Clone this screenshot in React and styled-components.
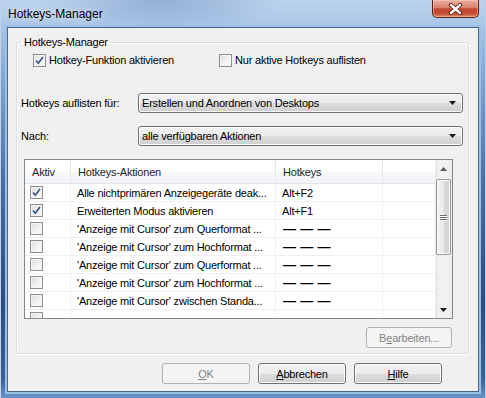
import styled, { createGlobalStyle } from 'styled-components';

const GlobalStyle = createGlobalStyle`
  html, body {
    margin: 0;
    padding: 0;
  }
  body {
    font-family: "Liberation Sans", Arial, sans-serif;
    font-size: 11px;
    letter-spacing: -0.2px;
    color: #000;
  }
  #root {
    width: 486px;
    height: 398px;
    overflow: hidden;
  }
`;

const rows = [
  { on: true, action: 'Alle nichtprimären Anzeigegeräte deak...', key: 'Alt+F2' },
  { on: true, action: 'Erweiterten Modus aktivieren', key: 'Alt+F1' },
  { on: false, action: "'Anzeige mit Cursor' zum Querformat ...", key: null },
  { on: false, action: "'Anzeige mit Cursor' zum Hochformat ...", key: null },
  { on: false, action: "'Anzeige mit Cursor' zum Querformat ...", key: null },
  { on: false, action: "'Anzeige mit Cursor' zum Hochformat ...", key: null },
  { on: false, action: "'Anzeige mit Cursor' zwischen Standa...", key: null },
];

const CheckBox = ({ checked }) => (
  <Box>
    {checked && (
      <svg width="11" height="11" viewBox="0 0 11 11">
        <path d="M2 5.5 L4.3 8.2 L9 2" fill="none" stroke="#3d5684" strokeWidth="1.7" />
      </svg>
    )}
  </Box>
);

const Arrow = ({ up }) => (
  <svg width="7" height="4" viewBox="0 0 7 4">
    <path d={up ? 'M0 4 L3.5 0 L7 4 Z' : 'M0 0 L7 0 L3.5 4 Z'} fill={up ? '#5a5a5a' : '#1a1a1a'} />
  </svg>
);

const App = () => {
  return (
    <>
      <GlobalStyle />
      <Window>
        <TitleBar>
          <Title>Hotkeys-Manager</Title>
          <CloseBtn>
            <svg width="15" height="12" viewBox="0 0 15 12">
              <path d="M3 2 L12 10 M12 2 L3 10" stroke="#5b1d12" strokeWidth="4.2" strokeLinecap="round" />
              <path d="M3 2 L12 10 M12 2 L3 10" stroke="#fff" strokeWidth="2.4" strokeLinecap="round" />
            </svg>
          </CloseBtn>
        </TitleBar>
        <Client>
          <Group>
            <Legend>Hotkeys-Manager</Legend>
            <CheckRow>
              <CheckOption $width={186}>
                <CheckBox checked />
                Hotkey-Funktion aktivieren
              </CheckOption>
              <CheckOption>
                <CheckBox />
                Nur aktive Hotkeys auflisten
              </CheckOption>
            </CheckRow>
            <FieldRow $top={26}>
              <FieldLabel>Hotkeys auflisten für:</FieldLabel>
              <Select>
                <span>Erstellen und Anordnen von Desktops</span>
                <Arrow />
              </Select>
            </FieldRow>
            <FieldRow $top={13}>
              <FieldLabel>Nach:</FieldLabel>
              <Select>
                <span>alle verfügbaren Aktionen</span>
                <Arrow />
              </Select>
            </FieldRow>
            <List>
              <Table>
                <HeaderRow>
                  <HeadCell $w={46}>Aktiv</HeadCell>
                  <HeadCell $w={205}>Hotkeys-Aktionen</HeadCell>
                  <HeadCell $w={107}>Hotkeys</HeadCell>
                  <HeadCell $w={52} />
                </HeaderRow>
                {rows.map((r, i) => (
                  <Row key={i}>
                    <Cell $w={46} $pad={5}>
                      <CheckBox checked={r.on} />
                    </Cell>
                    <Cell $w={205}>{r.action}</Cell>
                    <Cell $w={107}>{r.key ? r.key : <Dashes>— — —</Dashes>}</Cell>
                    <Cell $w={52} />
                  </Row>
                ))}
                <Row>
                  <Cell $w={46} $pad={5}>
                    <CheckBox />
                  </Cell>
                  <Cell $w={205} />
                  <Cell $w={107} />
                  <Cell $w={52} />
                </Row>
              </Table>
              <ScrollBar>
                <ScrollBtn>
                  <Arrow up />
                </ScrollBtn>
                <Thumb>
                  <Grip />
                  <Grip />
                  <Grip />
                </Thumb>
                <ScrollBtn $bottom>
                  <Arrow />
                </ScrollBtn>
              </ScrollBar>
            </List>
            <ActionRow>
              <Button disabled $w={86}>
                B<u>e</u>arbeiten...
              </Button>
            </ActionRow>
          </Group>
          <ButtonRow>
            <Button disabled>
              <u>O</u>K
            </Button>
            <Button>
              <u>A</u>bbrechen
            </Button>
            <Button>
              <u>H</u>ilfe
            </Button>
          </ButtonRow>
        </Client>
      </Window>
    </>
  );
};

export default App;

const Window = styled.div`
  width: 486px;
  height: 398px;
  box-sizing: border-box;
  display: flex;
  flex-direction: column;
  border-left: 1px solid #c3d3e6;
  border-right: 1px solid #b9cde4;
  background:
    radial-gradient(ellipse 120px 30px at 160px 0px, rgba(70, 110, 170, 0.35), transparent),
    linear-gradient(180deg, #bcd3ec 0px, #a9c5e7 26px, #87aad6 70px, #4a6fa6 180px, #2c4c82 300px, #3a6199 380px, #6a93c8 398px);
`;

const TitleBar = styled.div`
  height: 27px;
  display: flex;
  justify-content: space-between;
  align-items: flex-start;
  padding: 0 6px 0 7px;
`;

const Title = styled.div`
  font-size: 12px;
  letter-spacing: 0;
  line-height: 14px;
  padding-top: 7px;
  color: #000;
  text-shadow: 0 0 8px rgba(255, 255, 255, 0.9);
`;

const CloseBtn = styled.div`
  width: 45px;
  height: 17px;
  display: flex;
  align-items: center;
  justify-content: center;
  border: 1px solid #5e2419;
  border-top: none;
  border-radius: 0 0 5px 5px;
  background: linear-gradient(180deg, #eab0a2 0%, #d9806c 45%, #c3462e 52%, #c84e33 80%, #de8a6e 100%);
  box-shadow: inset 0 0 0 1px rgba(255, 210, 200, 0.45);
`;

const Client = styled.div`
  flex: 1;
  margin: 0 6px 6px 6px;
  border: 1px solid #4c6488;
  background: #f0f0f0;
  box-shadow: 0 0 0 2px #9dc0e7;
  display: flex;
  flex-direction: column;
`;

const Group = styled.fieldset`
  margin: 7px 9px 0 8px;
  padding: 0 4px 5px 4px;
  border: 1px solid #d5dfe5;
  border-radius: 3px;
  box-shadow: inset 1px 1px 0 #fff, 1px 1px 0 #fff;
  display: flex;
  flex-direction: column;
  min-width: 0;
`;

const Legend = styled.legend`
  padding: 0 3px;
  margin-left: 0;
  line-height: 14px;
  color: #000;
`;

const CheckRow = styled.div`
  display: flex;
  margin: 5px 0 0 12px;
  height: 13px;
`;

const CheckOption = styled.label`
  display: flex;
  align-items: center;
  gap: 3px;
  width: ${p => (p.$width ? `${p.$width}px` : 'auto')};
  line-height: 13px;
  white-space: nowrap;
`;

const Box = styled.span`
  width: 13px;
  height: 13px;
  box-sizing: border-box;
  flex: none;
  border: 1px solid #8f8f8f;
  background: linear-gradient(135deg, #dcdcdc 0%, #f0f0f0 50%, #fdfdfd 100%);
  box-shadow: inset 0 0 0 1px #f4f4f4;
  display: flex;
  align-items: center;
  justify-content: center;
`;

const FieldRow = styled.div`
  display: flex;
  align-items: center;
  margin-top: ${p => p.$top}px;
  margin-right: 1px;
`;

const FieldLabel = styled.div`
  width: 117px;
  flex: none;
`;

const Select = styled.div`
  flex: 1;
  height: 20px;
  box-sizing: border-box;
  border: 1px solid #707070;
  border-radius: 3px;
  background: linear-gradient(180deg, #f2f2f2 0%, #ebebeb 50%, #dddddd 51%, #cfcfcf 100%);
  box-shadow: inset 0 0 0 1px #fbfbfb;
  display: flex;
  align-items: center;
  justify-content: space-between;
  padding: 0 6px 0 3px;
`;

const List = styled.div`
  margin: 13px 0 0 3px;
  width: 429px;
  height: 160px;
  box-sizing: border-box;
  border: 1px solid #828790;
  background: #fff;
  display: flex;
  overflow: hidden;
`;

const Table = styled.div`
  width: 410px;
  display: flex;
  flex-direction: column;
`;

const HeaderRow = styled.div`
  display: flex;
  height: 23px;
  flex: none;
  border-bottom: 1px solid #e3e6ea;
  background: linear-gradient(180deg, #ffffff 0%, #ffffff 50%, #f7f8fa 51%, #f2f3f5 100%);
`;

const HeadCell = styled.div`
  width: ${p => p.$w}px;
  box-sizing: border-box;
  flex: none;
  padding-left: 7px;
  border-right: 1px solid #e3e6ea;
  display: flex;
  align-items: center;
  color: #1e1e1e;
  &:last-child {
    border-right: none;
  }
`;

const Row = styled.div`
  display: flex;
  height: 18px;
  flex: none;
  box-sizing: border-box;
  border-bottom: 1px solid #f0f0f0;
`;

const Cell = styled.div`
  width: ${p => p.$w}px;
  box-sizing: border-box;
  flex: none;
  padding-left: ${p => (p.$pad !== undefined ? p.$pad : 6)}px;
  border-right: 1px solid #f0f0f0;
  display: flex;
  align-items: center;
  white-space: nowrap;
  overflow: hidden;
  &:last-child {
    border-right: none;
  }
`;

const Dashes = styled.span`
  font-size: 13px;
  font-weight: bold;
  letter-spacing: 0.3px;
  padding-left: 1px;
`;

const ScrollBar = styled.div`
  width: 17px;
  flex: none;
  display: flex;
  flex-direction: column;
  background: linear-gradient(90deg, #e6e6e6 0%, #f2f2f2 30%, #f2f2f2 80%, #e9e9e9 100%);
`;

const ScrollBtn = styled.div`
  height: 17px;
  flex: none;
  display: flex;
  align-items: center;
  justify-content: center;
  margin-top: ${p => (p.$bottom ? 'auto' : '0')};
`;

const Thumb = styled.div`
  margin: 2px 1px 0 1px;
  height: 76px;
  box-sizing: border-box;
  border: 1px solid #979797;
  border-radius: 2px;
  background: linear-gradient(90deg, #f4f4f4 0%, #e9e9e9 50%, #dadada 51%, #d2d2d2 100%);
  box-shadow: inset 0 0 0 1px #fafafa;
  display: flex;
  flex-direction: column;
  align-items: center;
  justify-content: center;
  gap: 1px;
`;

const Grip = styled.span`
  width: 7px;
  height: 1px;
  background: #6e6e6e;
  box-shadow: 0 1px 0 #fff;
`;

const ActionRow = styled.div`
  display: flex;
  justify-content: flex-end;
  margin: 8px 12px 0 0;
`;

const Button = styled.div`
  width: ${p => (p.$w ? p.$w : 88)}px;
  height: 21px;
  box-sizing: border-box;
  flex: none;
  border: 1px solid ${p => (p.disabled ? '#adb2b5' : '#707070')};
  border-radius: 3px;
  background: ${p =>
    p.disabled
      ? '#f4f4f4'
      : 'linear-gradient(180deg, #f2f2f2 0%, #ebebeb 50%, #dddddd 51%, #cfcfcf 100%)'};
  box-shadow: ${p => (p.disabled ? 'none' : 'inset 0 0 0 1px #fcfcfc')};
  color: ${p => (p.disabled ? '#838383' : '#000')};
  display: flex;
  align-items: center;
  justify-content: center;
  u {
    text-decoration: underline;
    text-underline-offset: 1px;
  }
`;

const ButtonRow = styled.div`
  display: flex;
  justify-content: flex-end;
  gap: 8px;
  margin-top: 9px;
  padding-right: 36px;
`;
